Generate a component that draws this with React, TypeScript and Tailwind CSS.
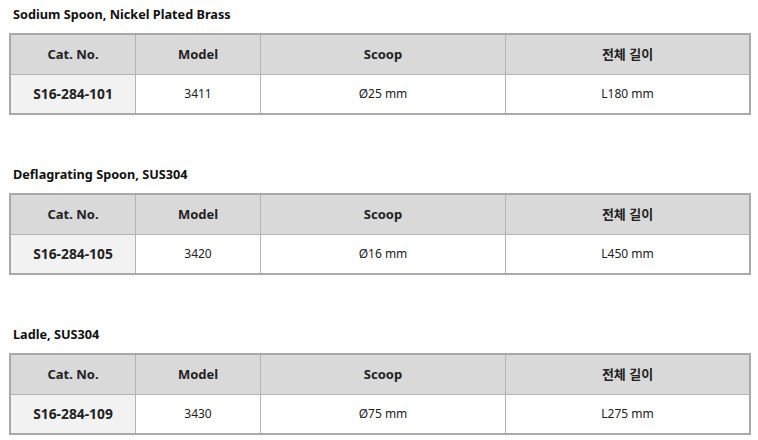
import React from "react";

const font = { fontFamily: '"Noto Sans", "Noto Sans CJK KR", sans-serif' };

type Row = { title: string; cat: string; model: string; scoop: string; len: string };

const rows: Row[] = [
  { title: "Sodium Spoon, Nickel Plated Brass", cat: "S16-284-101", model: "3411", scoop: "Ø25 mm", len: "L180 mm" },
  { title: "Deflagrating Spoon, SUS304", cat: "S16-284-105", model: "3420", scoop: "Ø16 mm", len: "L450 mm" },
  { title: "Ladle, SUS304", cat: "S16-284-109", model: "3430", scoop: "Ø75 mm", len: "L275 mm" },
];

function Section({ r }: { r: Row }) {
  return (
    <div className="mb-[45px]">
      <div className="pl-[13px] pt-[4px] mb-[9px] leading-[20px] text-[12.7px] font-bold text-[#111]">{r.title}</div>
      <div className="ml-[9px] w-[742px] border-2 border-[#a9a9a9]">
        <div className="grid grid-cols-[124px_124px_244px_243px] gap-x-px bg-[#b4b4b4] text-[13px] text-[#222]">
          <div className="h-[39px] bg-[#d9d9d9] flex items-center justify-center font-bold">Cat. No.</div>
          <div className="h-[39px] bg-[#d9d9d9] flex items-center justify-center font-bold">Model</div>
          <div className="h-[39px] bg-[#d9d9d9] flex items-center justify-center font-bold">Scoop</div>
          <div className="h-[39px] bg-[#d9d9d9] flex items-center justify-center font-bold">전체 길이</div>
        </div>
        <div className="h-px bg-[#b4b4b4]" />
        <div className="grid grid-cols-[124px_124px_244px_243px] gap-x-px bg-[#b4b4b4] text-[12px] text-[#222]">
          <div className="h-[38px] bg-[#f2f2f2] flex items-center justify-center font-bold text-[13.8px]">{r.cat}</div>
          <div className="h-[38px] bg-white flex items-center justify-center">{r.model}</div>
          <div className="h-[38px] bg-white flex items-center justify-center">{r.scoop}</div>
          <div className="h-[38px] bg-white flex items-center justify-center">{r.len}</div>
        </div>
      </div>
    </div>
  );
}

export default function App() {
  return (
    <div className="w-[758px] h-[440px] bg-white overflow-hidden" style={font}>
      {rows.map((r) => (
        <Section key={r.cat} r={r} />
      ))}
    </div>
  );
}
